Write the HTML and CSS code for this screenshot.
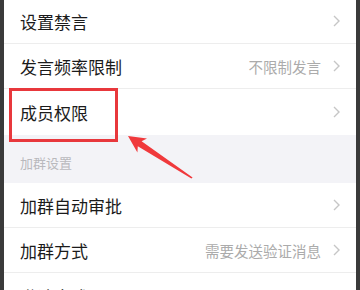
FILE: index.html
```html
<!DOCTYPE html>
<html lang="zh-CN">
<head>
    <meta charset="UTF-8">
    <meta name="viewport" content="width=device-width, initial-scale=1.0">
    <title>群管理</title>
    <link rel="stylesheet" href="styles.css">
</head>
<body>
    <div class="screen">
        <div class="group first">
            <div class="row">
                <span class="label">设置禁言</span>
                <svg class="chevron" width="7" height="12" viewBox="0 0 7 12"><polyline points="1,1 6,6 1,11" /></svg>
            </div>
            <div class="row">
                <span class="label">发言频率限制</span>
                <span class="value">不限制发言</span>
                <svg class="chevron" width="7" height="12" viewBox="0 0 7 12"><polyline points="1,1 6,6 1,11" /></svg>
            </div>
            <div class="row">
                <span class="label">成员权限</span>
                <svg class="chevron" width="7" height="12" viewBox="0 0 7 12"><polyline points="1,1 6,6 1,11" /></svg>
            </div>
        </div>

        <div class="section-title">加群设置</div>

        <div class="group">
            <div class="row">
                <span class="label">加群自动审批</span>
                <svg class="chevron" width="7" height="12" viewBox="0 0 7 12"><polyline points="1,1 6,6 1,11" /></svg>
            </div>
            <div class="row">
                <span class="label">加群方式</span>
                <span class="value">需要发送验证消息</span>
                <svg class="chevron" width="7" height="12" viewBox="0 0 7 12"><polyline points="1,1 6,6 1,11" /></svg>
            </div>
            <div class="row">
                <span class="label">邀请方式</span>
                <span class="value">需群主审核</span>
                <svg class="chevron" width="7" height="12" viewBox="0 0 7 12"><polyline points="1,1 6,6 1,11" /></svg>
            </div>
        </div>

        <!-- annotation -->
        <div class="highlight"></div>
        <svg class="arrow" width="80" height="55" viewBox="0 0 80 55">
            <polygon points="8,6 27,8.6 21.6,11.3 72.6,47.4 71.4,48.6 17.8,16.2 17.4,22.4" fill="#f0393c"/>
        </svg>
    </div>
</body>
</html>
```

FILE: styles.css
```css
body {
    margin: 0;
    font-family: "Noto Sans CJK SC", "Noto Sans", sans-serif;
    background-color: #3a3a3a;
}
.screen {
    position: relative;
    width: 352px;
    height: 290px;
    margin: 0 4px;
    background-color: #f3f3f7;
    overflow: hidden;
}
.group {
    background-color: #fff;
}
.group.first {
    margin-top: -1px;
}
.row {
    display: flex;
    align-items: center;
    height: 45px;
    padding: 0 16px 0 16px;
    box-sizing: border-box;
    border-bottom: 1px solid #ededed;
}
.row:last-child {
    border-bottom: none;
    height: 46px;
}
.label {
    flex: 1;
    font-size: 17px;
    color: #1b1b1b;
}
.value {
    font-size: 14.5px;
    color: #ababab;
    margin-right: 12px;
}
.chevron {
    fill: none;
    stroke: #c6c6c6;
    stroke-width: 1.4;
}
.section-title {
    height: 48px;
    box-sizing: border-box;
    display: flex;
    align-items: flex-end;
    padding: 0 0 13px 16px;
    font-size: 13px;
    line-height: 14px;
    color: #b9b9bd;
}
.highlight {
    position: absolute;
    left: 5px;
    top: 88px;
    width: 103px;
    height: 48px;
    border: 3px solid #e8383c;
}
.arrow {
    position: absolute;
    left: 116px;
    top: 130px;
}
```
